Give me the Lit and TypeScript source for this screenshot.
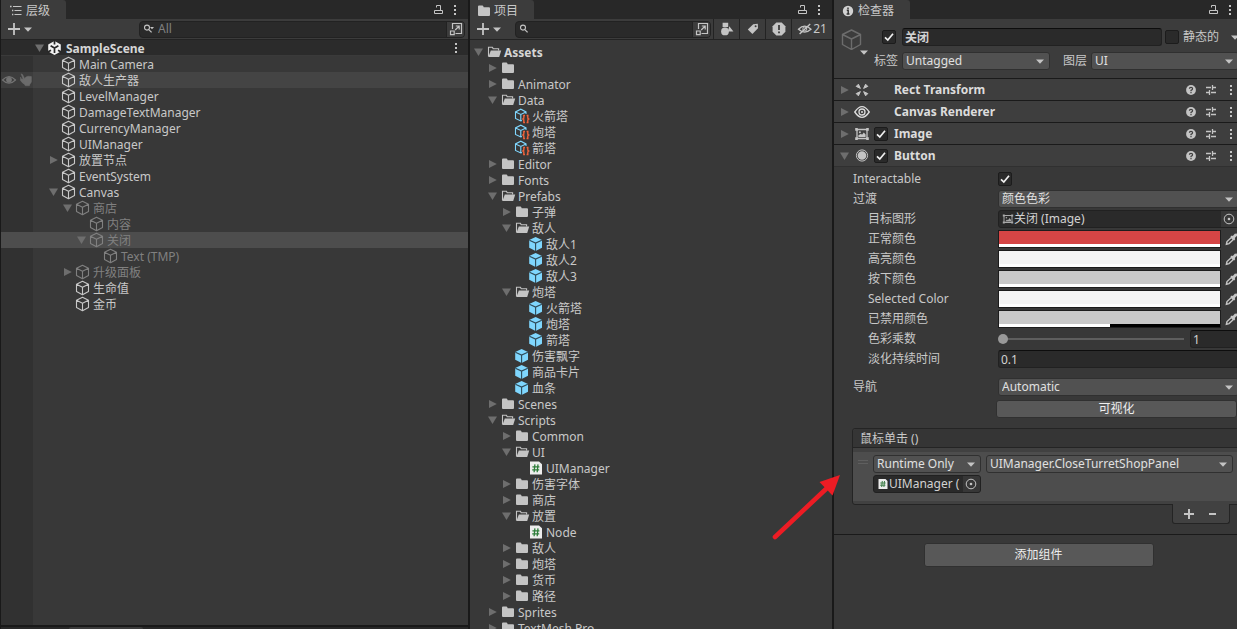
import { LitElement, html, svg, css, nothing } from "lit";
import { customElement } from "lit/decorators.js";
import { classMap } from "lit/directives/class-map.js";
import { styleMap } from "lit/directives/style-map.js";

/* ---------- icons ---------- */

const box = (size: number, body: unknown, cls = "") =>
  html`<svg class="icon ${cls}" width=${size} height=${size} viewBox="0 0 ${size} ${size}" aria-hidden="true">${body}</svg>`;

const icons = {
  cube: () => box(16, svg`<path d="M7.5 1.2 13.5 4.2V11.6L7.5 14.8 1.5 11.6V4.2ZM1.5 4.2 7.5 7.3 13.5 4.2M7.5 7.3V14.8" fill="none" stroke="currentColor" stroke-width="1.1" stroke-linejoin="round"/>`),
  bigCube: () => html`<svg class="icon" width="22" height="22" viewBox="0 0 22 22" aria-hidden="true"><path d="M11.5 2 20.5 6.5V16.5L11.5 21.5 2.5 16.5V6.5ZM2.5 6.5 11.5 11 20.5 6.5M11.5 11V21.5" fill="none" stroke="#6c6c6c" stroke-width="1.4" stroke-linejoin="round"/></svg>`,
  unity: () => box(16, svg`<path d="M7.5 1 13.8 4.4V11.4L7.5 15 1.2 11.4V4.4Z" fill="#f2f2f2"/><path d="M7.5 8V13M7.5 8 3.6 5.8M7.5 8 11.4 5.8M7.5 0V4.4M0.8 12 4 10.2M14.2 12 11 10.2" fill="none" stroke="#282828" stroke-width="1.7"/>`),
  folder: () => box(16, svg`<path d="M2 3.5Q2 2.6 3 2.6H6.4Q7 2.6 7.3 3.3L7.7 4.3H13Q14 4.3 14 5.3V12Q14 13 13 13H3Q2 13 2 12Z" fill="#c4c4c4"/>`),
  folderOpen: () => box(16, svg`<path d="M2.5 12.4V3.2H6.4L7.2 4.8H12.6V6.6" fill="none" stroke="#c4c4c4" stroke-width="1.1"/><path d="M4.8 6.4H15.2L13.2 12.9H2.4Z" fill="#c4c4c4"/>`),
  prefab: () => box(16, svg`<path d="M7.6 1 14 3.9V11.8L7.6 15 1.2 11.8V3.9Z" fill="#7fd6fd"/><path d="M1.4 4.3 7.6 7.1 13.8 4.3M7.6 7.1V15" fill="none" stroke="#2f4a58" stroke-width="1.1"/>`),
  asset: () => box(16, svg`<path d="M8 12.5 6.8 13 1.5 10.5V3.9L6.8 1.2 12 3.9V6M1.5 3.9 6.8 6.4 12 3.9M6.8 6.4V12.8" fill="none" stroke="#7fd6fd" stroke-width="1.1"/><path d="M11 7.5H9.8V10.2L8.8 11L9.8 11.8V14.5H11M12.6 7.5H13.8V10.2L14.8 11L13.8 11.8V14.5H12.6" fill="none" stroke="#f0633c" stroke-width="1.4"/>`),
  script: () => box(16, svg`<path d="M2 1.5H11L14 4.2V14.6H2Z" fill="#ededed"/><path d="M6.9 4.4 6.1 12.2M10 4.4 9.2 12.2M4.4 6.9H11.4M4.2 9.8H11.2" stroke="#2e7d3a" stroke-width="1.3"/>`),
  scriptSmall: () => box(12, svg`<path d="M1.5 1H8.5L10.5 3V11H1.5Z" fill="#ededed"/><path d="M5.3 3 4.7 9M7.5 3 6.9 9M3.3 5H8.6M3.2 7.2H8.4" stroke="#3c7d47" stroke-width="1"/>`),
  right: () => box(14, svg`<path d="M3 3V11L10.8 7Z" fill="#6e6e6e"/>`),
  down: () => box(14, svg`<path d="M2 3.5H11L6.5 11Z" fill="#6e6e6e"/>`),
  caret: () => html`<svg class="icon caret" width="8" height="5" viewBox="0 0 8 5" aria-hidden="true"><path d="M0 .5H8L4 4.8Z" fill="#c4c4c4"/></svg>`,
  plus: () => box(14, svg`<path d="M7 1V13M1 7H13" stroke="#c4c4c4" stroke-width="1.8"/>`),
  list: () => box(14, svg`<path d="M4 2.5H12.5M5.5 6.5H12.5M5.5 10.5H12.5" stroke="#c4c4c4" stroke-width="1.1"/><path d="M1 2.5H2.6M3 6.5H4.3M3 10.5H4.3" stroke="#c4c4c4" stroke-width="1.3"/>`),
  info: () => box(12, svg`<circle cx="6" cy="6" r="5.2" fill="#d2d2d2"/><path d="M6 2.4V4M4.8 5.3H6.2V9M4.6 9H7.5" stroke="#303030" stroke-width="1.4" fill="none"/>`),
  lock: () => box(12, svg`<path d="M2.5 6.5H10.5V9.5H2.5ZM4.5 3.5V1.5H8.5V6.5" fill="none" stroke="#c4c4c4" stroke-width="1"/>`),
  dots: () => html`<svg class="icon" width="4" height="12" viewBox="0 0 4 12" aria-hidden="true"><path d="M1 1H3V3H1ZM1 5H3V7H1ZM1 9H3V11H1Z" fill="#c4c4c4"/></svg>`,
  search: (menu = false) => box(12, svg`<circle cx="4" cy="4.6" r="2.5" fill="none" stroke="#c4c4c4" stroke-width="1.1"/><path d="M5.8 6.6 8.6 9.4" stroke="#c4c4c4" stroke-width="1.3"/>${menu ? svg`<path d="M7 4H11L9 6.3Z" fill="#c4c4c4"/>` : nothing}`),
  popout: () => box(14, svg`<path d="M3.5 7V1.5H12.5V11.5H6.5M1.5 9H5.2V12.7H1.5ZM6.2 8 10.2 4M6.8 4H10.2V7.4" fill="none" stroke="#c4c4c4" stroke-width="1.2"/>`),
  shapes: () => box(14, svg`<path d="M2.6.8H8.2V5H2.6ZM9.3 4.2 13.4 9.6H7.8Z" fill="#c4c4c4"/><circle cx="5" cy="9.4" r="3.9" fill="#c4c4c4"/>`),
  tag: () => box(14, svg`<path d="M7.2 2.2 11.8 1.8 12 6.2 6.4 12 1.8 7.6Z" fill="#c4c4c4"/><circle cx="9.6" cy="4.2" r="1" fill="#3c3c3c"/>`),
  alert: () => box(14, svg`<path d="M4.3.6H9.7L13.4 4.3V9.7L9.7 13.4H4.3L.6 9.7V4.3Z" fill="#c4c4c4"/><path d="M7 3V8M7 9.4V11.2" stroke="#333" stroke-width="1.7"/>`),
  hidden: () => box(16, svg`<path d="M1.5 8.3Q7.6 1.8 14 8.3Q7.6 14 1.5 8.3Z" fill="none" stroke="#c4c4c4" stroke-width="1.3"/><circle cx="7.8" cy="8" r="2" fill="none" stroke="#c4c4c4"/><path d="M2.6 13 13.2 3" stroke="#c4c4c4" stroke-width="1.4"/>`),
  eye: () => box(16, svg`<path d="M1.5 8Q8 1.2 14.5 8Q8 14.4 1.5 8Z" fill="none" stroke="#737373" stroke-width="1.1"/><circle cx="8" cy="7.8" r="2.9" fill="#737373"/>`),
  hand: () => box(16, svg`<path d="M4 1.8 5.6 2.6 7.6 6.4 9 5 11 4.2 14.4 4.6V10L12.8 12.4 12.4 13.8H8.4L6 10.6 4 7.6 4.8 6.8 6.2 7.2ZM3.6 5 5.4 9.6 7.4 11.4 6 11.4 3.4 8.4Z" fill="#6b6b6b" stroke="#6b6b6b" stroke-width=".5"/>`),
  rect: () => box(16, svg`<path d="M2.2 4.4 4.4 2.2 6.4 6.4ZM13.8 4.4 11.6 2.2 9.6 6.4ZM2.2 11.6 4.4 13.8 6.4 9.6ZM13.8 11.6 11.6 13.8 9.6 9.6Z" fill="#c4c4c4" stroke="#c4c4c4" stroke-linejoin="round"/>`),
  canvas: () => box(16, svg`<path d="M.8 8Q8-2.8 15.2 8Q8 18.8.8 8Z" fill="none" stroke="#dcdcdc" stroke-width="1.4"/><circle cx="8" cy="8" r="3" fill="none" stroke="#dcdcdc" stroke-width="1.3"/><circle cx="8" cy="8" r="1" fill="#dcdcdc"/>`),
  image: () => box(16, svg`<path d="M3 3.5H13V12.5H3Z" fill="none" stroke="#c4c4c4" stroke-width="1.3"/><path d="M1.2 2.1H3.8V4.7H1.2ZM12.2 2.1H14.8V4.7H12.2ZM1.2 11.3H3.8V13.9H1.2ZM12.2 11.3H14.8V13.9H12.2ZM4.4 11V9.3L7 7.8 8 8.8 9.8 6.6 11.6 8.4V11Z" fill="#c4c4c4"/><circle cx="5.9" cy="6.2" r="1" fill="#c4c4c4"/>`),
  imageSmall: () => box(12, svg`<path d="M2 2.5H10V9.5H2Z" fill="none" stroke="#a8a8a8"/><path d="M.8 1.5H2.8V3.4H.8ZM9.2 1.5H11.2V3.4H9.2ZM.8 8.6H2.8V10.5H.8ZM9.2 8.6H11.2V10.5H9.2ZM3 8.5 5 6.5 6 7.2 7.5 5 9 7V8.5Z" fill="#a8a8a8"/><circle cx="4.4" cy="4.7" r=".8" fill="#a8a8a8"/>`),
  radio: () => box(16, svg`<circle cx="8" cy="7.5" r="5.6" fill="none" stroke="#c4c4c4" stroke-width="1"/><circle cx="8" cy="7.5" r="4.3" fill="#c4c4c4"/>`),
  help: () => box(12, svg`<circle cx="6" cy="6" r="4.9" fill="#c4c4c4"/><path d="M4.4 4.8Q4.4 3.4 6 3.4T7.6 4.8Q7.6 5.7 6 6.4V7.2M6 8V9.2" fill="none" stroke="#3e3e3e" stroke-width="1.2"/>`),
  sliders: () => box(12, svg`<path d="M1 3.5H6M7.5 3.5H11M7.5 1V6M1 8.5H4.4M6 8.5H11M4.5 6V11" fill="none" stroke="#c4c4c4" stroke-width="1.3"/>`),
  target: () => box(12, svg`<circle cx="6" cy="6" r="4.8" fill="none" stroke="#c4c4c4"/><circle cx="6" cy="6" r="1.3" fill="#c4c4c4"/>`),
  dropper: () => box(14, svg`<path d="M1.4 12.2 2 9.6 6.4 5.4 8.4 7.4 4 11.6Z" fill="none" stroke="#c4c4c4" stroke-width="1.4"/><path d="M5.4 4.4 6.8 3.4 7.8 4 9.8 1.8 11.8 1.4 12.2 3.6 9.8 6 10.2 7.2 9.2 8.4Z" fill="#c4c4c4"/>`),
  check: () => box(12, svg`<path d="M2 6.4 4.8 9 10 2.8" fill="none" stroke="#f0f0f0" stroke-width="1.7"/>`, "mark"),
  minus: () => box(14, svg`<path d="M3 7H10" stroke="#c4c4c4" stroke-width="2"/>`),
  addSmall: () => box(14, svg`<path d="M6 2V12M1 7H11" stroke="#c4c4c4" stroke-width="2"/>`),
};

/* ---------- shared styles ---------- */

const shared = css`
  :host {
    display: flex;
    flex-direction: column;
    min-width: 0;
    min-height: 0;
    overflow: hidden;
    background: #383838;
    color: #c8c8c8;
    font: 12px/16px "Noto Sans", "Noto Sans CJK SC", sans-serif;
  }
  * { box-sizing: border-box; }
  .icon { display: block; flex: none; }
  button {
    display: flex;
    align-items: center;
    justify-content: center;
    margin: 0;
    padding: 0;
    border: 0;
    background: none;
    color: inherit;
    font: inherit;
  }
  input, select { font: inherit; color: inherit; margin: 0; min-width: 0; }
  .tabs {
    flex: none;
    display: flex;
    align-items: center;
    height: 19px;
    background: #282828;
    padding-right: 11px;
    gap: 9px;
  }
  .tab {
    height: 19px;
    padding: 2px 16px 0 8px;
    gap: 3px;
    margin-right: auto;
    background: #3c3c3c;
    border-radius: 0 3px 0 0;
  }
  .toolbar {
    flex: none;
    display: flex;
    align-items: center;
    height: 21px;
    background: #3c3c3c;
    border-bottom: 1px solid #232323;
  }
  .create { gap: 3px; padding-left: 6px; }
  .search {
    flex: 1;
    display: flex;
    align-items: center;
    height: 17px;
    border: 1px solid #222;
    border-radius: 4px;
    background: #2a2a2a;
    padding-left: 3px;
    overflow: hidden;
  }
  .search input {
    flex: 1;
    border: 0;
    padding: 0 0 0 3px;
    height: 15px;
    background: none;
    outline: none;
  }
  .search input::placeholder { color: #808080; }
  .search button {
    align-self: stretch;
    width: 18px;
    background: #3c3c3c;
    border-left: 1px solid #222;
  }
  .tree { list-style: none; margin: 0; padding: 0; }
  .row { display: flex; align-items: center; height: 16px; white-space: nowrap; }
  .fold { width: 14px; height: 16px; flex: none; }
  .name { padding: 2px 0 0 2px; }
  .bold { font-weight: 700; color: #d6d6d6; }
  .dim { color: #808080; }
`;

interface TreeItem {
  name: string;
  depth: number;
  icon: keyof typeof icons;
  open?: boolean;
  state?: string;
}

const treeContent = (item: TreeItem) => html`
  <span class="indent" style=${styleMap({ width: `${item.depth * 14}px` })}></span>
  ${item.open === undefined
    ? html`<span class="fold"></span>`
    : html`<button class="fold" aria-label="Toggle ${item.name}" aria-expanded=${item.open}>${item.open ? icons.down() : icons.right()}</button>`}
  ${(icons[item.icon] as () => unknown)()}
  <span class="name">${item.name}</span>
`;

const windowTabs = (icon: unknown, title: string) => html`
  <div class="tabs">
    <button class="tab">${icon}<span>${title}</span></button>
    <button aria-label="Lock">${icons.lock()}</button>
    <button aria-label="Menu">${icons.dots()}</button>
  </div>
`;

/* ---------- hierarchy ---------- */

const hierarchy: TreeItem[] = [
  { name: "Main Camera", depth: 1, icon: "cube" },
  { name: "敌人生产器", depth: 1, icon: "cube", state: "hover" },
  { name: "LevelManager", depth: 1, icon: "cube" },
  { name: "DamageTextManager", depth: 1, icon: "cube" },
  { name: "CurrencyManager", depth: 1, icon: "cube" },
  { name: "UIManager", depth: 1, icon: "cube" },
  { name: "放置节点", depth: 1, icon: "cube", open: false },
  { name: "EventSystem", depth: 1, icon: "cube" },
  { name: "Canvas", depth: 1, icon: "cube", open: true },
  { name: "商店", depth: 2, icon: "cube", open: true, state: "dim" },
  { name: "内容", depth: 3, icon: "cube", state: "dim" },
  { name: "关闭", depth: 3, icon: "cube", open: true, state: "dim selected" },
  { name: "Text (TMP)", depth: 4, icon: "cube", state: "dim" },
  { name: "升级面板", depth: 2, icon: "cube", open: false, state: "dim" },
  { name: "生命值", depth: 2, icon: "cube" },
  { name: "金币", depth: 2, icon: "cube" },
];

@customElement("hierarchy-panel")
class HierarchyPanel extends LitElement {
  static styles = [shared, css`
    .search { margin: 0 3px 0 107px; }
    .content {
      flex: 1;
      background: linear-gradient(to right, #313131 32px, transparent 32px);
    }
    .scene { background: #2b2b2b; border-bottom: 1px solid #3a3a3a; padding: 0 10px 0 32px; }
    .scene .name { padding-left: 3px; margin-right: auto; }
    .gutter { display: flex; width: 32px; flex: none; }
    .hover { background: linear-gradient(to right, #3d3d3d 32px, #444 32px); }
    .selected { background: #4d4d4d; }
  `];

  render() {
    return html`
      ${windowTabs(icons.list(), "层级")}
      <div class="toolbar">
        <button class="create" aria-label="Create">${icons.plus()}${icons.caret()}</button>
        <label class="search">${icons.search(true)}<input type="text" placeholder="All" aria-label="Search hierarchy" /><button aria-label="Open search window">${icons.popout()}</button></label>
      </div>
      <div class="content">
        <div class="row scene bold">
          <button class="fold" aria-label="Toggle SampleScene">${icons.down()}</button>
          ${icons.unity()}<span class="name">SampleScene</span>
          <button aria-label="Scene menu">${icons.dots()}</button>
        </div>
        <ul class="tree">
          ${hierarchy.map((item) => {
            const state = item.state ?? "";
            const classes = {
              row: true,
              hover: state.includes("hover"),
              dim: state.includes("dim"),
              selected: state.includes("selected"),
            };
            return html`<li class=${classMap(classes)}>
              <span class="gutter">${classes.hover ? html`${icons.eye()}${icons.hand()}` : nothing}</span>
              ${treeContent(item)}
            </li>`;
          })}
        </ul>
      </div>
    `;
  }
}

/* ---------- project ---------- */

const closed = (name: string, depth: number): TreeItem => ({ name, depth, icon: "folder", open: false });
const opened = (name: string, depth: number): TreeItem => ({ name, depth, icon: "folderOpen", open: true });
const leaf = (name: string, depth: number, icon: keyof typeof icons): TreeItem => ({ name, depth, icon });

const project: TreeItem[] = [
  { ...opened("Assets", 0), state: "bold" },
  closed("", 1),
  closed("Animator", 1),
  opened("Data", 1),
  leaf("火箭塔", 2, "asset"),
  leaf("炮塔", 2, "asset"),
  leaf("箭塔", 2, "asset"),
  closed("Editor", 1),
  closed("Fonts", 1),
  opened("Prefabs", 1),
  closed("子弹", 2),
  opened("敌人", 2),
  leaf("敌人1", 3, "prefab"),
  leaf("敌人2", 3, "prefab"),
  leaf("敌人3", 3, "prefab"),
  opened("炮塔", 2),
  leaf("火箭塔", 3, "prefab"),
  leaf("炮塔", 3, "prefab"),
  leaf("箭塔", 3, "prefab"),
  leaf("伤害飘字", 2, "prefab"),
  leaf("商品卡片", 2, "prefab"),
  leaf("血条", 2, "prefab"),
  closed("Scenes", 1),
  opened("Scripts", 1),
  closed("Common", 2),
  opened("UI", 2),
  leaf("UIManager", 3, "script"),
  closed("伤害字体", 2),
  closed("商店", 2),
  opened("放置", 2),
  leaf("Node", 3, "script"),
  closed("敌人", 2),
  closed("炮塔", 2),
  closed("货币", 2),
  closed("路径", 2),
  closed("Sprites", 1),
  closed("TextMesh Pro", 1),
];

@customElement("project-panel")
class ProjectPanel extends LitElement {
  static styles = [shared, css`
    .tab { padding-left: 6px; gap: 2px; }
    .search { margin: 0 2px 0 14px; }
    .tool { width: 26px; height: 20px; border-left: 1px solid #232323; }
    .count { width: 41px; }
    .tree { flex: 1; min-height: 0; overflow: hidden; padding: 4px 0 0 2px; }
  `];

  render() {
    return html`
      ${windowTabs(icons.folder(), "项目")}
      <div class="toolbar">
        <button class="create" aria-label="Create">${icons.plus()}${icons.caret()}</button>
        <label class="search">${icons.search()}<input type="text" aria-label="Search project" /><button aria-label="Open search window">${icons.popout()}</button></label>
        <button class="tool" aria-label="Search by type">${icons.shapes()}</button>
        <button class="tool" aria-label="Search by label">${icons.tag()}</button>
        <button class="tool" aria-label="Search by log">${icons.alert()}</button>
        <button class="tool count" aria-label="Hidden packages">${icons.hidden()}<span>21</span></button>
      </div>
      <ul class="tree">
        ${project.map((item) => html`<li class=${classMap({ row: true, bold: item.state === "bold" })}>${treeContent(item)}</li>`)}
      </ul>
    `;
  }
}

/* ---------- inspector ---------- */

const tick = (id: string, label: string, checked = true) => html`
  <span class="check"><input type="checkbox" id=${id} aria-label=${label} .checked=${checked} />${checked ? icons.check() : nothing}</span>
`;

const dropdown = (id: string, value: string, label = value) => html`
  <span class="dropdown"><select id=${id} aria-label=${label}><option>${value}</option></select>${icons.caret()}</span>
`;

const colors = [
  { label: "正常颜色", color: "#d54545", alpha: 100 },
  { label: "高亮颜色", color: "#f5f5f5", alpha: 100 },
  { label: "按下颜色", color: "#c8c8c8", alpha: 100 },
  { label: "Selected Color", color: "#f5f5f5", alpha: 100 },
  { label: "已禁用颜色", color: "#c8c8c8", alpha: 50 },
];

const components = [
  { title: "Rect Transform", icon: icons.rect, toggle: false, open: false },
  { title: "Canvas Renderer", icon: icons.canvas, toggle: false, open: false },
  { title: "Image", icon: icons.image, toggle: true, open: false },
  { title: "Button", icon: icons.radio, toggle: true, open: true },
];

@customElement("inspector-panel")
class InspectorPanel extends LitElement {
  static styles = [shared, css`
    .tab { gap: 4px; }
    .check { display: grid; width: 14px; height: 14px; flex: none; }
    .check > * { grid-area: 1 / 1; }
    .check input {
      appearance: none;
      width: 14px;
      height: 14px;
      background: #2a2a2a;
      border: 1px solid #1c1c1c;
      border-radius: 2px;
    }
    .mark { margin: 1px; pointer-events: none; }
    .dropdown { display: grid; align-items: center; min-width: 0; }
    .dropdown > * { grid-area: 1 / 1; }
    .dropdown .caret { justify-self: end; margin-right: 6px; pointer-events: none; }
    select {
      appearance: none;
      width: 100%;
      height: 18px;
      padding: 0 16px 0 3px;
      line-height: 16px;
      color: #e0e0e0;
      background: #515151;
      border: 1px solid #303030;
      border-radius: 3px;
    }
    .text {
      width: 100%;
      height: 18px;
      padding: 0 2px;
      background: #2a2a2a;
      border: 1px solid #212121;
      border-top-color: #0d0d0d;
      border-radius: 3px;
      color: #d2d2d2;
      outline: none;
    }
    .header {
      display: grid;
      grid-template-columns: 30px 1fr;
      gap: 8px;
      padding: 9px 4px 8px 6px;
      background: #3c3c3c;
    }
    .object { display: flex; flex-direction: column; align-items: flex-end; height: 26px; padding-right: 2px; }
    .object .icon:first-child { margin-right: 6px; }
    .lines { display: grid; gap: 6px; min-width: 0; }
    .line { display: flex; align-items: center; height: 18px; }
    .enable { padding: 0 6px 0 4px; }
    .line .title { flex: 1; font-weight: 700; }
    .static { display: flex; align-items: center; gap: 4px; padding: 0 12px 0 3px; white-space: nowrap; }
    .props {
      display: grid;
      grid-template-columns: 24px 1fr 33px 1fr;
      align-items: center;
      column-gap: 4px;
      height: 18px;
      margin-left: -4px;
    }
    .props .second { margin-left: 9px; }
    .component {
      display: flex;
      align-items: center;
      height: 22px;
      border-top: 1px solid #1a1a1a;
      background: #3e3e3e;
      padding: 0 10px 0 4px;
    }
    .component > .icon { margin: 0 2px; }
    .component .check { margin: 0 6px 0 2px; }
    .component .title { font-weight: 700; color: #dcdcdc; margin-right: auto; }
    .actions { display: flex; align-items: center; gap: 8px; }
    .actions button:last-child { margin-left: 4px; }
    .fields { display: grid; gap: 2px; padding: 3px 4px 0 19px; border-top: 1px solid #303030; }
    .field { display: grid; grid-template-columns: 145px 1fr; align-items: center; height: 18px; }
    .sub > label { padding-left: 15px; }
    .navigation { margin-top: 8px; }
    .reference {
      display: flex;
      align-items: center;
      height: 18px;
      width: 100%;
      padding: 0 0 0 3px;
      justify-content: flex-start;
      background: #2a2a2a;
      border: 1px solid #212121;
      border-radius: 3px;
      color: #d2d2d2;
      white-space: nowrap;
      overflow: hidden;
    }
    .reference .value { flex: 1; text-align: left; }
    .pick { display: flex; align-items: center; align-self: stretch; padding: 0 3px 0 2px; background: #373737; }
    .colour { display: grid; grid-template-columns: 1fr 14px; gap: 4px; align-items: center; }
    .swatch {
      display: grid;
      grid-template: 13px 3px / 100%;
      align-items: stretch;
      justify-content: stretch;
      height: 18px;
      background: #000;
      border: 1px solid #1c1c1c;
    }
    .alpha { background: #fff; }
    .range { display: grid; grid-template-columns: 1fr 49px; gap: 6px; align-items: center; }
    .range input[type="range"] { appearance: none; width: 100%; height: 10px; background: linear-gradient(#5e5e5e, #5e5e5e) 5px 4px / 100% 2px no-repeat; }
    .range input[type="range"]::-webkit-slider-thumb { appearance: none; width: 10px; height: 10px; border-radius: 50%; background: #999; }
    .action {
      height: 18px;
      width: 100%;
      background: #585858;
      border: 1px solid #303030;
      border-radius: 3px;
      color: #eee;
    }
    .visualise { margin: 2px 2px 0 143px; width: auto; }
    .event { margin: 10px 4px 0 18px; }
    .list { border: 1px solid #242424; border-radius: 3px 3px 0 3px; background: #414141; }
    .caption-bar { height: 19px; padding: 2px 7px 0; background: #353535; border-bottom: 1px solid #242424; border-radius: 3px 3px 0 0; }
    .entry {
      display: grid;
      grid-template-columns: 10px 108px 1fr;
      column-gap: 5px;
      row-gap: 2px;
      margin: 4px 0 3px;
      height: 49px;
      padding: 3px 5px 8px;
      align-content: start;
      background: #4d4d4d;
    }
    .grip { height: 4px; margin-top: 5px; border: solid #5f5f5f; border-width: 1px 0; }
    .entry .reference { grid-column: 2; }
    .footer { display: flex; justify-content: flex-end; padding-right: 9px; }
    .buttons {
      display: flex;
      justify-content: space-around;
      align-items: center;
      width: 58px;
      height: 20px;
      margin-top: -1px;
      padding: 0 5px;
      background: #414141;
      border: 1px solid #242424;
      border-top: 0;
      border-radius: 0 0 3px 3px;
    }
    .add { display: flex; justify-content: center; margin-top: 10px; padding-top: 8px; border-top: 1px solid #1a1a1a; }
    .add .action { width: 230px; height: 24px; }
  `];

  render() {
    return html`
      ${windowTabs(icons.info(), "检查器")}
      <div class="header">
        <button class="object" aria-label="Object icon">${icons.bigCube()}${icons.caret()}</button>
        <div class="lines">
          <div class="line">
            <span class="enable">${tick("active", "Active")}</span>
            <input class="text title" type="text" value="关闭" aria-label="Object name" />
            <span class="static">${tick("static", "静态的", false)}<label for="static">静态的</label></span>
            <button aria-label="Static options">${icons.caret()}</button>
          </div>
          <div class="props">
            <label for="tag">标签</label>${dropdown("tag", "Untagged", "标签")}
            <label class="second" for="layer">图层</label>${dropdown("layer", "UI", "图层")}
          </div>
        </div>
      </div>
      ${components.map((c) => html`
        <div class="component">
          <button class="fold" aria-label="Toggle ${c.title}">${c.open ? icons.down() : icons.right()}</button>
          ${c.icon()}
          ${c.toggle ? tick(`on-${c.title}`, c.title) : html`<span class="check"></span>`}
          <span class="title">${c.title}</span>
          <span class="actions">
            <button aria-label="Help">${icons.help()}</button>
            <button aria-label="Presets">${icons.sliders()}</button>
            <button aria-label="Menu">${icons.dots()}</button>
          </span>
        </div>`)}
      <div class="fields">
        <div class="field"><label for="interactable">Interactable</label>${tick("interactable", "Interactable")}</div>
        <div class="field"><label for="transition">过渡</label>${dropdown("transition", "颜色色彩", "过渡")}</div>
        <div class="field sub"><label for="target">目标图形</label>
          <button class="reference" id="target">${icons.imageSmall()}<span class="value">关闭 (Image)</span><span class="pick">${icons.target()}</span></button>
        </div>
        ${colors.map((c, i) => html`
          <div class="field sub"><label for="color-${i}">${c.label}</label>
            <span class="colour">
              <button class="swatch" id="color-${i}">
                <span style=${styleMap({ background: c.color })}></span>
                <span class="alpha" style=${styleMap({ width: `${c.alpha}%` })}></span>
              </button>
              <button aria-label="Pick ${c.label}">${icons.dropper()}</button>
            </span>
          </div>`)}
        <div class="field sub"><label for="multiplier">色彩乘数</label>
          <span class="range"><input type="range" id="multiplier" min="1" max="5" value="1" /><input class="text" type="text" value="1" aria-label="色彩乘数" /></span>
        </div>
        <div class="field sub"><label for="fade">淡化持续时间</label><input class="text" id="fade" type="text" value="0.1" /></div>
        <div class="field navigation"><label for="nav">导航</label>${dropdown("nav", "Automatic", "导航")}</div>
        <button class="action visualise">可视化</button>
      </div>
      <div class="event">
        <div class="list">
          <div class="caption-bar">鼠标单击 ()</div>
          <div class="entry">
            <span class="grip"></span>
            ${dropdown("call-state", "Runtime Only")}
            ${dropdown("call-method", "UIManager.CloseTurretShopPanel")}
            <button class="reference">${icons.scriptSmall()}<span class="value">UIManager (</span><span class="pick">${icons.target()}</span></button>
          </div>
        </div>
        <div class="footer">
          <div class="buttons"><button aria-label="Add">${icons.addSmall()}</button><button aria-label="Remove">${icons.minus()}</button></div>
        </div>
      </div>
      <div class="add"><button class="action">添加组件</button></div>
    `;
  }
}

/* ---------- editor window ---------- */

@customElement("app-root")
class AppRoot extends LitElement {
  static styles = css`
    :host {
      display: grid;
      grid-template-columns: 467fr 362fr 403fr;
      column-gap: 2px;
      position: relative;
      height: 100vh;
      padding-left: 1px;
      box-sizing: border-box;
      overflow: hidden;
      background: #191919;
    }
    .left { display: grid; grid-template-rows: 1fr 2px; row-gap: 2px; min-height: 0; }
    .dock { background: #282828; padding-left: 68px; }
    .dock-tab { width: 74px; height: 2px; background: #3c3c3c; border-radius: 3px 3px 0 0; }
    .inspector { margin-right: -6px; }
    .pointer { position: absolute; left: 770px; top: 470px; pointer-events: none; }
  `;

  render() {
    return html`
      <div class="left">
        <hierarchy-panel></hierarchy-panel>
        <div class="dock"><div class="dock-tab"></div></div>
      </div>
      <project-panel></project-panel>
      <inspector-panel class="inspector"></inspector-panel>
      <svg class="pointer" width="76" height="74" viewBox="0 0 76 74" aria-hidden="true">
        <path d="M5 67 56 19" stroke="#ed1c24" stroke-width="4.6" stroke-linecap="round"/>
        <path d="M70 5 62.5 25.5 49.5 12Z" fill="#ed1c24"/>
      </svg>
    `;
  }
}
